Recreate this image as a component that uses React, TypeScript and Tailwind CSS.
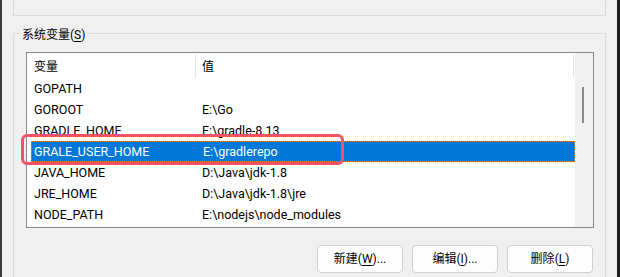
const rows = [
  { name: "GOPATH", value: "" },
  { name: "GOROOT", value: "E:\\Go" },
  { name: "GRADLE_HOME", value: "E:\\gradle-8.13" },
  { name: "GRALE_USER_HOME", value: "E:\\gradlerepo", selected: true },
  { name: "JAVA_HOME", value: "D:\\Java\\jdk-1.8" },
  { name: "JRE_HOME", value: "D:\\Java\\jdk-1.8\\jre" },
  { name: "NODE_PATH", value: "E:\\nodejs\\node_modules" },
];

function Btn({ label, hot, tail }: { label: string; hot: string; tail: string }) {
  return (
    <button className="w-[86px] h-[28px] rounded-[4px] border border-[#d0d0d0] bg-[#fdfdfd] text-[12px] text-black flex items-center justify-center">
      {label}(<span className="underline underline-offset-2">{hot}</span>){tail}
    </button>
  );
}

export default function App() {
  return (
    <div
      className="flex h-[277px] w-[620px] overflow-hidden bg-[#f0f0f0] text-black"
      style={{ fontFamily: 'Roboto, "Noto Sans CJK SC", sans-serif' }}
    >
      <div className="w-[2px] bg-[#3a3a3a]" />
      <div className="relative flex flex-1 flex-col">
        {/* top group (cut off) */}
        <div className="mx-[11px] h-[16px] border-x border-b border-[#dcdcdc]" />

        {/* system variables group */}
        <div className="relative mx-[11px] mt-[17px] flex flex-1 flex-col border-x border-t border-[#dcdcdc]">
          <div className="absolute -top-[7px] left-[6px] bg-[#f0f0f0] px-[2px] text-[12px] leading-[16px]">
            系统变量(<span className="underline underline-offset-2">S</span>)
          </div>

          <div className="ml-[12px] mr-[11px] mt-[18px] flex h-[176px] border border-[#828790] bg-white">
            <div className="flex flex-1 flex-col">
              <div className="flex h-[25px] pt-[1px] text-[12px]">
                <div className="flex w-[169px] items-center border-r border-[#e5e5e5] pl-[7px] pt-[2px]">变量</div>
                <div className="flex flex-1 items-center border-r border-[#e5e5e5] pl-[6px] pt-[2px]">值</div>
                <div className="w-[1px]" />
              </div>
              {rows.map(r => (
                <div
                  key={r.name}
                  className={`ml-[4px] flex h-[21px] items-center pt-[1px] text-[12.5px] ${
                    r.selected ? "border border-dotted border-[#e0913a] bg-[#0078d7] text-white" : ""
                  }`}
                >
                  <div className={`w-[171px] ${r.selected ? "pl-[2px]" : "pl-[3px]"}`}>{r.name}</div>
                  <div className="flex-1 whitespace-nowrap">{r.value}</div>
                </div>
              ))}
            </div>
            <div className="w-[18px] bg-[#f0f0f0] pt-[34px]">
              <div className="ml-[7px] h-[36px] w-[2px] bg-[#8a8a8a]" />
            </div>
          </div>

          <div className="mr-[12px] mt-[17px] flex justify-end gap-[9px]">
            <Btn label="新建" hot="W" tail="..." />
            <Btn label="编辑" hot="I" tail="..." />
            <Btn label="删除" hot="L" tail="" />
          </div>
        </div>

        {/* highlight annotation */}
        <div className="absolute left-[19px] top-[134px] h-[31px] w-[323px] rounded-[6px] border-[3px] border-[#f1546a]" />
      </div>
      <div className="w-[3px] bg-[#1f1f1f]" />
    </div>
  );
}
